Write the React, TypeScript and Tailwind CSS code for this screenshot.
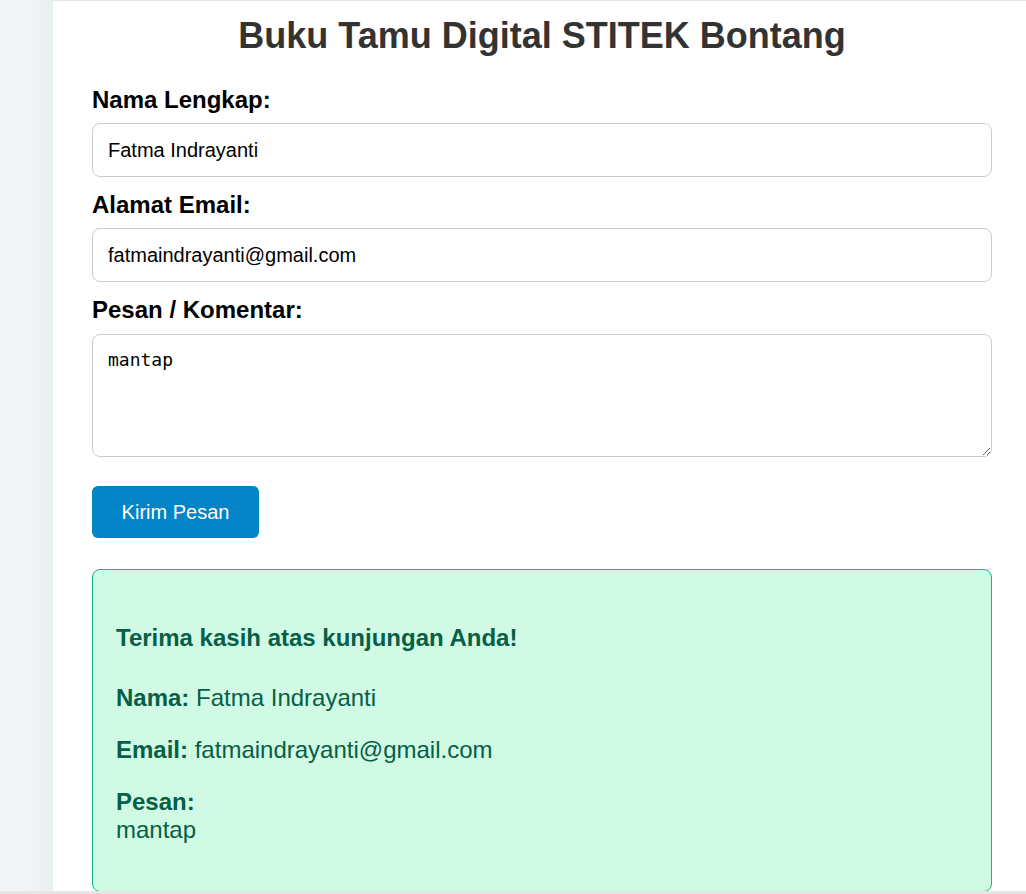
import { useState } from 'react'

export default function App() {
  const [nama, setNama] = useState('Fatma Indrayanti')
  const [email, setEmail] = useState('fatmaindrayanti@gmail.com')
  const [pesan, setPesan] = useState('mantap')

  return (
    <div className="h-[894px] overflow-hidden bg-[#f1f5f6] font-['Liberation_Sans',Arial,sans-serif] flex flex-col">
      <div className="flex flex-1 min-h-0">
        {/* left gutter */}
        <div className="w-[53px] shrink-0 bg-gradient-to-r from-[#f1f5f6] via-[#f1f5f6] to-[#e9eef0]" />

        {/* card */}
        <div className="w-[980px] shrink-0 bg-white border-t border-[#e6e6e6] pl-[39px] pr-[40px]">
          <h1 className="mt-[14px] text-[36px] leading-[41px] font-bold text-[#333] text-center w-[900px]">
            Buku Tamu Digital STITEK Bontang
          </h1>

          <form className="w-[900px] mt-[30px]" onSubmit={(e) => e.preventDefault()}>
            <label className="block text-[24px] leading-[28px] font-bold text-black">Nama Lengkap:</label>
            <input
              value={nama}
              onChange={(e) => setNama(e.target.value)}
              className="mt-[9px] block w-full h-[54px] px-[15px] border border-[#cccccc] rounded-[8px] text-[20px] text-black outline-none"
            />

            <label className="block mt-[14px] text-[24px] leading-[28px] font-bold text-black">Alamat Email:</label>
            <input
              value={email}
              onChange={(e) => setEmail(e.target.value)}
              className="mt-[9px] block w-full h-[54px] px-[15px] border border-[#cccccc] rounded-[8px] text-[20px] text-black outline-none"
            />

            <label className="block mt-[14px] text-[24px] leading-[28px] font-bold text-black">Pesan / Komentar:</label>
            <textarea
              value={pesan}
              onChange={(e) => setPesan(e.target.value)}
              className="mt-[10px] block w-full h-[123px] px-[15px] py-[14px] border border-[#cccccc] rounded-[8px] text-[18px] leading-[22px] text-black font-['DejaVu_Sans_Mono',monospace] outline-none resize-y"
            />

            <button
              type="submit"
              className="mt-[29px] h-[52px] w-[167px] rounded-[6px] bg-[#0284c7] text-white text-[20px]"
            >
              Kirim Pesan
            </button>
          </form>

          {/* success box */}
          <div className="w-[900px] mt-[31px] h-[323px] bg-[#d1fae5] border border-[#10b981] rounded-[8px] pl-[23px] pt-[54px] text-[#065f46]">
            <h3 className="text-[24px] leading-[28px] font-bold">Terima kasih atas kunjungan Anda!</h3>
            <p className="mt-[32px] text-[24px] leading-[28px]">
              <strong>Nama:</strong> Fatma Indrayanti
            </p>
            <p className="mt-[24px] text-[24px] leading-[28px]">
              <strong>Email:</strong> fatmaindrayanti@gmail.com
            </p>
            <p className="mt-[24px] text-[24px] leading-[28px]">
              <strong>Pesan:</strong>
              <br />
              mantap
            </p>
          </div>
        </div>
      </div>
      <div className="h-[3px] shrink-0 bg-[#e6e6e6]" />
    </div>
  )
}
